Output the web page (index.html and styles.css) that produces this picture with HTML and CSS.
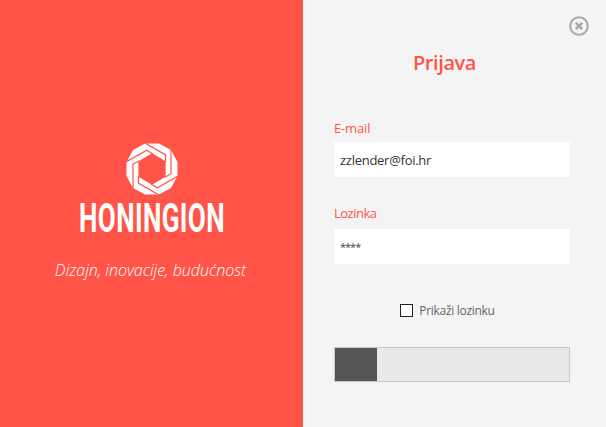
FILE: index.html
```html
<!DOCTYPE html>
<html lang="hr">
<head>
<meta charset="utf-8">
<title>Prijava</title>
<link rel="stylesheet" href="styles.css">
</head>
<body>
<main class="window">
  <section class="brand">
    <svg class="logo" viewBox="-26 -26 52 52">
      <path class="ring" fill-rule="evenodd" d="M-7 -25.500H7L19 -19L25.500 -7V7L19 19L7 25.500H-7L-19 19L-25.500 7V-7L-19 -19ZM0 -15.700L-13.600 -7.850V7.850L0 15.700L13.600 7.850V-7.850Z"/>
      <g class="seams">
        <path id="seam" d="M-7.500 -26.300L13.600 -14.100V-7"/>
        <use href="#seam" transform="rotate(60)"/>
        <use href="#seam" transform="rotate(120)"/>
        <use href="#seam" transform="rotate(180)"/>
        <use href="#seam" transform="rotate(240)"/>
        <use href="#seam" transform="rotate(300)"/>
      </g>
    </svg>
    <svg class="wordmark" viewBox="0 0 146 30"><text x="0" y="29" textLength="146" lengthAdjust="spacingAndGlyphs">HONINGION</text></svg>
    <p class="tagline">Dizajn, inovacije, budućnost</p>
  </section>
  <section class="login">
    <svg class="close" viewBox="0 0 20 20"><circle cx="10" cy="10" r="8.8"/><path d="M6.800 6.800L13.200 13.200M13.200 6.800L6.800 13.200"/></svg>
    <h1>Prijava</h1>
    <label class="label">E-mail</label>
    <div class="field">zzlender@foi.hr</div>
    <label class="label second">Lozinka</label>
    <div class="field password">****</div>
    <div class="show"><span class="box"></span><span>Prikaži lozinku</span></div>
    <div class="progress"><div class="bar"></div></div>
  </section>
</main>
</body>
</html>
```
FILE: styles.css
```css
* { box-sizing: border-box; }
body { margin: 0; font-family: "Open Sans", "Noto Sans", sans-serif; }
.window { display: flex; width: 606px; height: 427px; overflow: hidden; }
.brand { width: 303px; background: #ff5447; display: flex; flex-direction: column; align-items: center; padding-top: 143px; }
.logo { width: 52px; height: 52px; }
.ring { fill: #fff; }
.seams { fill: none; stroke: #ff5447; stroke-width: 1.2; }
.wordmark { width: 146px; height: 30px; margin-top: 8px; overflow: visible; }
.wordmark text { font: 700 40px Roboto, sans-serif; letter-spacing: .6px; fill: #fff; }
.tagline { margin: 26px 2px 0 0; color: #fff; font: italic 300 16px/22px "Open Sans", sans-serif; white-space: nowrap; }
.login { position: relative; width: 303px; background: #f4f4f4; padding: 48px 36px 0 31px; }
.close { position: absolute; left: 266px; top: 16px; width: 20px; height: 20px; fill: none; stroke: #a8a8a8; stroke-width: 2; }
.close path { stroke-width: 2.6; }
h1 { margin: 0 0 40px; padding-right: 15px; text-align: center; color: #ff5447; font-size: 20px; line-height: 30px; font-weight: 600; letter-spacing: -.4px; }
.label { display: block; height: 24px; line-height: 20px; font-size: 13px; letter-spacing: -.15px; color: #ff5447; }
.second { margin-top: 26px; height: 26px; letter-spacing: -.5px; }
.field { height: 35px; background: #fff; padding-left: 6px; font-size: 13px; line-height: 37px; letter-spacing: -.27px; color: #333; }
.password { font-size: 11px; line-height: 35px; letter-spacing: -1px; color: #444; }
.show { display: flex; align-items: center; justify-content: center; gap: 6px; height: 20px; margin: 36px 9px 27px 0; font-size: 12px; letter-spacing: -.3px; color: #666; }
.box { width: 13px; height: 13px; background: #fff; border: 1px solid #222; }
.progress { height: 35px; border: 1px solid #c8c8c8; background: #e9e9e9; }
.bar { width: 42px; height: 33px; background: #555; }
```
